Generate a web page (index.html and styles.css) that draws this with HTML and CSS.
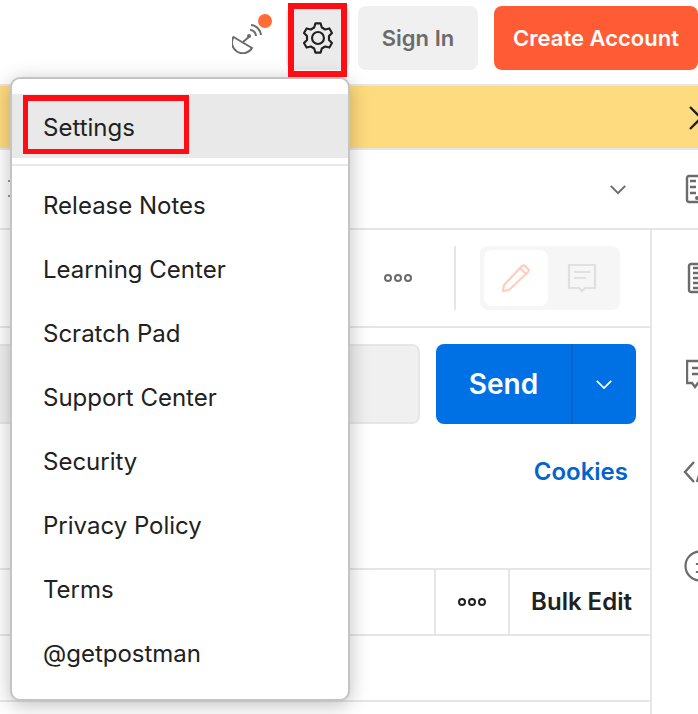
FILE: index.html
```html
<!DOCTYPE html>
<html lang="en">
<head>
    <meta charset="UTF-8">
    <title>Postman</title>
    <link rel="stylesheet" href="styles.css">
</head>
<body>
    <header class="topbar">
        <button class="icon-btn">
            <svg width="32" height="32" viewBox="0 0 32 32" fill="none" stroke="#6b6b6b" stroke-width="2">
                <path d="M1.5 15A10.5 10.5 0 0 0 20 26Z"/>
                <path d="M18 14L11 20"/>
                <circle cx="17" cy="14" r="2" fill="#6b6b6b" stroke="none"/>
                <path d="M18 8A6 6 0 0 1 24 14"/>
                <path d="M19 3A11 11 0 0 1 29 13"/>
            </svg>
            <span class="badge"></span>
        </button>
        <button class="icon-btn gear">
            <svg width="34" height="34" viewBox="0 0 32 32" fill="none" stroke="#212121" stroke-width="2" stroke-linejoin="round">
                <path d="M12.41 6.13L13.57 2.21H18.43L19.59 6.13L22.75 7.96L26.72 7L29.16 11.21L26.34 14.18V17.82L29.16 20.79L26.72 25L22.75 24.04L19.59 25.87L18.43 29.79H13.57L12.41 25.87L9.25 24.04L5.28 25L2.84 20.79L5.66 17.82V14.18L2.84 11.21L5.28 7L9.25 7.96Z"/>
                <circle cx="16" cy="16" r="5.6"/>
            </svg>
        </button>
        <button class="btn btn-signin">Sign In</button>
        <button class="btn btn-create">Create Account</button>
    </header>

    <div class="banner">
        <svg class="close" width="24" height="24" viewBox="0 0 24 24" fill="none" stroke="#212121" stroke-width="2.4">
            <path d="M1 1L12 12L1 23"/>
            <path d="M23 1L12 12L23 23"/>
        </svg>
    </div>

    <div class="tabbar">
        <svg class="tab-ticks" width="2" height="18" viewBox="0 0 2 18" fill="#999">
            <rect width="2" height="2"/>
            <rect y="15" width="2" height="2"/>
        </svg>
        <svg class="chevron" width="18" height="11" viewBox="0 0 20 12" fill="none" stroke="#6b6b6b" stroke-width="2.2">
            <path d="M2 2L10 10L18 2"/>
        </svg>
        <svg class="tab-doc" width="32" height="30" viewBox="0 0 32 30" fill="none" stroke="#6b6b6b" stroke-width="2.4">
            <rect x="2" y="2" width="28" height="26" rx="2"/>
            <path d="M5 7H11M5 13H11M5 19H11"/>
            <circle cx="12" cy="24" r="2" fill="#6b6b6b" stroke="none"/>
        </svg>
    </div>

    <div class="workspace">
        <main class="main">
            <div class="request-title">
                <svg class="dots" width="30" height="10" viewBox="0 0 30 10" fill="none" stroke="#6b6b6b" stroke-width="2">
                    <circle cx="5" cy="5" r="3"/>
                    <circle cx="15" cy="5" r="3"/>
                    <circle cx="25" cy="5" r="3"/>
                </svg>
                <span class="vline"></span>
                <div class="toggle">
                    <span class="toggle-item active">
                        <svg width="32" height="32" viewBox="0 0 32 32" fill="none" stroke="#ffcdbd" stroke-width="2.2" stroke-linejoin="round">
                            <path d="M3 29L4 23L22 4C23 3 24 3 25 4L28 7C29 8 29 9 28 10L9 28Z"/>
                            <path d="M20 6L26 12"/>
                        </svg>
                    </span>
                    <span class="toggle-item">
                        <svg width="32" height="32" viewBox="0 0 32 32" fill="none" stroke="#e0e0e0" stroke-width="2.2">
                            <path d="M3 3H29V26H19L16 29L13 26H3Z"/>
                            <path d="M8 10H24M8 16H20"/>
                        </svg>
                    </span>
                </div>
            </div>

            <div class="url-row">
                <div class="url-input"></div>
                <div class="send">
                    <span class="send-label">Send</span>
                    <span class="send-arrow">
                        <svg width="18" height="11" viewBox="0 0 20 12" fill="none" stroke="#fff" stroke-width="2">
                            <path d="M2 2L10 10L18 2"/>
                        </svg>
                    </span>
                </div>
            </div>

            <div class="options-row">
                <a class="cookies">Cookies</a>
            </div>

            <div class="params-head">
                <span class="cell cell-dots">
                    <svg width="30" height="10" viewBox="0 0 30 10" fill="none" stroke="#212121" stroke-width="2">
                        <circle cx="5" cy="5" r="3"/>
                        <circle cx="15" cy="5" r="3"/>
                        <circle cx="25" cy="5" r="3"/>
                    </svg>
                </span>
                <span class="cell cell-bulk">Bulk Edit</span>
            </div>
            <div class="params-row"></div>
        </main>

        <aside class="sidebar">
            <span class="side-item">
                <svg width="32" height="32" viewBox="0 0 32 32" fill="none" stroke="#6b6b6b" stroke-width="2.4">
                    <rect x="3" y="2" width="26" height="28" rx="2"/>
                    <path d="M7 6H20M7 11H20M7 16H20M7 21H20M7 26H20"/>
                </svg>
            </span>
            <span class="side-item">
                <svg width="32" height="32" viewBox="0 0 32 32" fill="none" stroke="#6b6b6b" stroke-width="2.4">
                    <path d="M1 3H30V25H12L9 29L6 25H1Z"/>
                    <path d="M6 10H22M6 16H22"/>
                </svg>
            </span>
            <span class="side-item">
                <svg class="side-code" width="32" height="32" viewBox="0 0 32 32" fill="none" stroke="#6b6b6b" stroke-width="2.4">
                    <path d="M11 6L2 16L11 26"/>
                    <path d="M14 26L20 6"/>
                </svg>
            </span>
            <span class="side-item">
                <svg class="side-info" width="32" height="32" viewBox="0 0 32 32" fill="none" stroke="#6b6b6b" stroke-width="2.2">
                    <circle cx="16" cy="16" r="14.5"/>
                    <path d="M13 13V15M13 21V23"/>
                </svg>
            </span>
        </aside>
    </div>

    <!-- settings dropdown -->
    <div class="menu">
        <a class="menu-item selected">Settings</a>
        <div class="menu-sep"></div>
        <a class="menu-item">Release Notes</a>
        <a class="menu-item">Learning Center</a>
        <a class="menu-item">Scratch Pad</a>
        <a class="menu-item">Support Center</a>
        <a class="menu-item">Security</a>
        <a class="menu-item">Privacy Policy</a>
        <a class="menu-item">Terms</a>
        <a class="menu-item">@getpostman</a>
    </div>

    <!-- red annotation boxes -->
    <div class="mark mark-gear"></div>
    <div class="mark mark-settings"></div>
</body>
</html>
```

FILE: styles.css
```css
* {
    margin: 0;
    padding: 0;
    box-sizing: border-box;
}

html, body {
    height: 714px;
    overflow: hidden;
}

body {
    position: relative;
    width: 698px;
    font-family: Inter, 'Noto Sans', sans-serif;
    background: #fff;
    color: #212121;
}

button {
    border: none;
    font-family: inherit;
}

/* Top bar */
.topbar {
    display: flex;
    justify-content: flex-end;
    align-items: flex-start;
    height: 86px;
    padding-top: 6px;
    border-bottom: 2px solid #e6e6e6;
}

.icon-btn {
    position: relative;
    display: flex;
    align-items: center;
    justify-content: center;
    width: 64px;
    height: 64px;
    background: none;
    border-radius: 8px;
    margin-right: 6px;
}

.gear {
    background: #ebebeb;
    margin-right: 8px;
}

.badge {
    position: absolute;
    top: 8px;
    left: 42px;
    width: 14px;
    height: 14px;
    border-radius: 50%;
    background: #ff6c37;
}

.btn {
    height: 64px;
    border-radius: 8px;
    font-size: 22px;
    font-weight: 600;
}

.btn-signin {
    width: 120px;
    background: #f0f0f0;
    color: #6b6b6b;
    margin-right: 16px;
}

.btn-create {
    width: 204px;
    background: #ff5c35;
    color: #fff;
}

/* Yellow banner */
.banner {
    display: flex;
    justify-content: flex-end;
    align-items: center;
    height: 64px;
    padding-top: 2px;
    background: #fedb7e;
    border-bottom: 2px solid #e6e6e6;
    overflow: hidden;
}

.close {
    margin-right: -15px;
}

/* Tab row */
.tabbar {
    display: flex;
    align-items: center;
    height: 80px;
    padding-left: 8px;
    border-bottom: 2px solid #e6e6e6;
}

.tabbar svg {
    flex-shrink: 0;
}

.chevron {
    margin-left: 599px;
}

.tab-doc {
    margin-left: 58px;
}

/* Workspace */
.workspace {
    display: flex;
}

.main {
    width: 652px;
    flex-shrink: 0;
    border-right: 2px solid #e6e6e6;
    height: 486px;
}

.request-title {
    display: flex;
    align-items: center;
    height: 98px;
    padding: 0 30px 0 383px;
    border-bottom: 2px solid #e6e6e6;
}

.dots {
    flex-shrink: 0;
}

.vline {
    width: 2px;
    height: 64px;
    margin: 0 24px 0 41px;
    background: #e6e6e6;
}

.toggle {
    display: flex;
    gap: 4px;
    width: 140px;
    height: 64px;
    padding: 4px;
    background: #f6f6f6;
    border-radius: 8px;
}

.toggle-item {
    display: flex;
    align-items: center;
    justify-content: center;
    width: 60px;
    border-radius: 8px;
}

.toggle-item.active {
    width: 64px;
    background: #fff;
}

.url-row {
    display: flex;
    gap: 16px;
    padding: 16px 14px 0 0;
}

.url-input {
    flex: 1;
    height: 80px;
    background: #f0f0f0;
    border: 2px solid #e6e6e6;
    border-left: none;
    border-radius: 0 8px 8px 0;
}

.send {
    display: flex;
    width: 200px;
    height: 80px;
    background: #0071e5;
    border-radius: 8px;
    color: #fff;
}

.send-label {
    display: flex;
    align-items: center;
    justify-content: center;
    width: 135px;
    font-size: 28px;
    font-weight: 600;
}

.send-arrow {
    display: flex;
    align-items: center;
    justify-content: center;
    flex: 1;
    padding-right: 2px;
    border-left: 2px solid #0265cc;
}

.options-row {
    display: flex;
    justify-content: flex-end;
    height: 146px;
    padding: 32px 22px 0 0;
    border-bottom: 2px solid #e6e6e6;
}

.cookies {
    font-size: 24px;
    font-weight: 600;
    line-height: 32px;
    color: #0265cc;
}

.params-head {
    display: flex;
    justify-content: flex-end;
    height: 66px;
    border-bottom: 2px solid #e6e6e6;
}

.cell {
    display: flex;
    align-items: center;
    justify-content: center;
    border-left: 2px solid #e6e6e6;
}

.cell-dots {
    width: 74px;
}

.cell-bulk {
    width: 142px;
    padding: 0 0 2px 3px;
    font-size: 24px;
    font-weight: 600;
}

.params-row {
    height: 66px;
    border-bottom: 2px solid #e6e6e6;
}

.sidebar {
    display: flex;
    flex-direction: column;
    flex-shrink: 0;
    padding-left: 34px;
}

.side-item {
    display: flex;
    align-items: center;
    height: 96px;
}

.side-item svg {
    flex-shrink: 0;
}

.side-code {
    margin: 4px 0 0 -3px;
}

.side-info {
    margin-left: -2px;
}

/* Dropdown menu */
.menu {
    position: absolute;
    top: 77px;
    left: 10px;
    width: 340px;
    height: 624px;
    padding-top: 15px;
    background: #fff;
    border: 2px solid #c4c4c4;
    border-radius: 10px;
    box-shadow: 0 4px 20px rgba(0, 0, 0, 0.25);
}

.menu-item {
    display: flex;
    align-items: center;
    height: 64px;
    padding-left: 31px;
    font-size: 24px;
}

.menu-item.selected {
    padding-top: 2px;
    background: #e9e9e9;
}

.menu-sep {
    height: 2px;
    margin: 6px 0 7px;
    background: #e9e9e9;
}

/* Annotations */
.mark {
    position: absolute;
    border: 6px solid #ff0c14;
}

.mark-gear {
    top: 3px;
    left: 288px;
    width: 59px;
    height: 74px;
}

.mark-settings {
    top: 95px;
    left: 23px;
    width: 166px;
    height: 59px;
    border-width: 6px 5px 5px;
}
```
